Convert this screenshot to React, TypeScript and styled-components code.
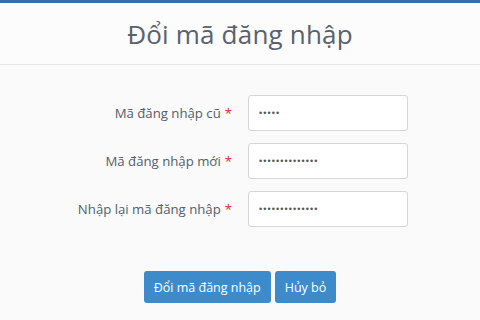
import * as React from 'react';
import styled, { createGlobalStyle } from 'styled-components';

const GlobalStyle = createGlobalStyle`
	html, body {
		margin: 0;
		padding: 0;
		background: #fafafa;
		font-family: 'Open Sans', 'Noto Sans', sans-serif;
	}
`;

let Page = styled.div`
	width: 480px;
	height: 320px;
	overflow: hidden;
	border-top: 3px solid #3a6ea8;
	box-sizing: border-box;
	background: #fafafa;
`;

let Header = styled.div`
	height: 61px;
	border-bottom: 1px solid #e6e6e6;
	display: flex;
	align-items: center;
	justify-content: center;
	background: #fcfcfc;
`;

let Title = styled.h1`
	margin: 0;
	font-size: 26px;
	font-weight: 400;
	color: #58616d;
	letter-spacing: 0.2px;
`;

let Form = styled.form`
	display: grid;
	grid-template-columns: 232px 160px;
	column-gap: 16px;
	row-gap: 12px;
	padding-top: 30px;
	align-items: center;
`;

let Label = styled.label`
	text-align: right;
	font-size: 13.2px;
	color: #545e6a;
`;

let Required = styled.span`
	color: #c9302c;
	margin-left: 4px;
`;

let Input = styled.input`
	box-sizing: border-box;
	width: 160px;
	height: 36px;
	padding: 0 10px;
	border: 1px solid #d6d6d6;
	border-radius: 3px;
	background: #fff;
	font-size: 9px;
	color: #555;
	letter-spacing: 1.1px;
	outline: none;
`;

let Actions = styled.div`
	display: flex;
	justify-content: center;
	gap: 4px;
	margin-top: 44px;
`;

let Button = styled.button`
	height: 32px;
	padding: 0 10px;
	border: none;
	border-radius: 3px;
	background: #3d8bcb;
	color: #fff;
	font-family: 'Open Sans', 'Noto Sans', sans-serif;
	font-size: 12.5px;
	cursor: pointer;
`;

const fields = [
	{ label: 'Mã đăng nhập cũ', value: '12345' },
	{ label: 'Mã đăng nhập mới', value: '12345678901234' },
	{ label: 'Nhập lại mã đăng nhập', value: '12345678901234' },
];

export default function App() {
	return (
		<Page>
			<GlobalStyle />
			<Header>
				<Title>Đổi mã đăng nhập</Title>
			</Header>
			<Form onSubmit={(e) => e.preventDefault()}>
				{fields.map((f) => (
					<React.Fragment key={f.label}>
						<Label>
							{f.label}
							<Required>*</Required>
						</Label>
						<Input type='password' defaultValue={f.value} />
					</React.Fragment>
				))}
			</Form>
			<Actions>
				<Button>Đổi mã đăng nhập</Button>
				<Button>Hủy bỏ</Button>
			</Actions>
		</Page>
	);
}
